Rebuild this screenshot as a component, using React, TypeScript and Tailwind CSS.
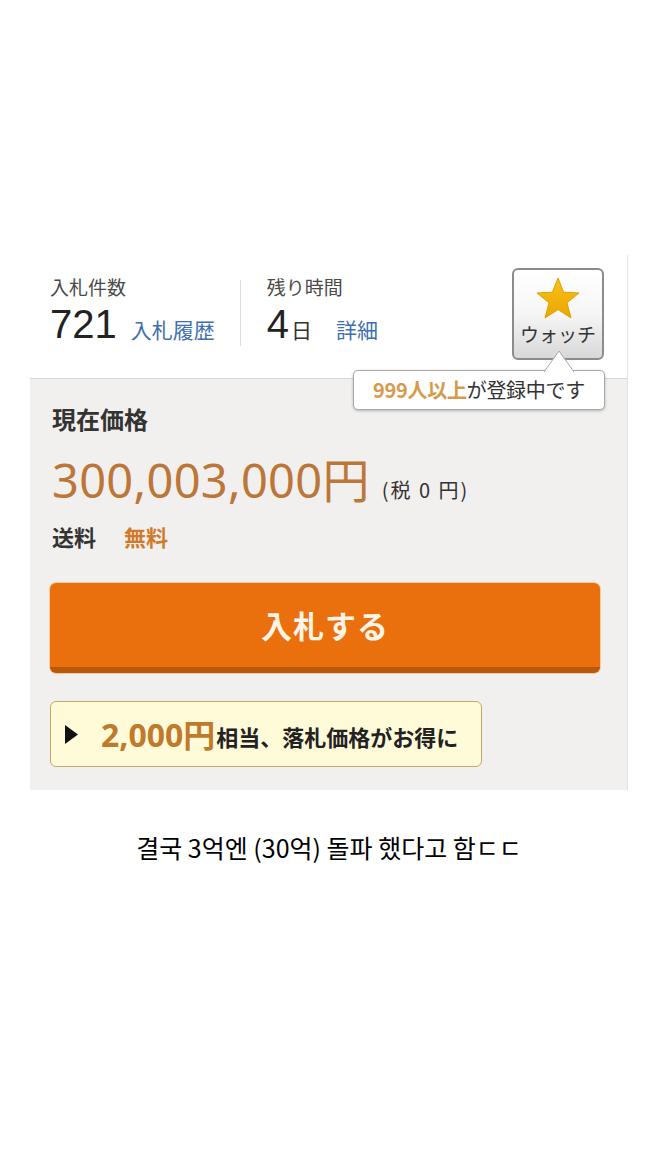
const jp = { fontFamily: '"Noto Sans CJK JP", "Noto Sans", sans-serif' };
const digits = { fontFamily: '"Liberation Sans", "Noto Sans", sans-serif' };

function Star() {
  return (
    <svg width="44" height="42" viewBox="0 0 44 42">
      <defs>
        <linearGradient id="starFill" x1="0" y1="0" x2="0" y2="1">
          <stop offset="0" stopColor="#f7c21a" />
          <stop offset="1" stopColor="#eba600" />
        </linearGradient>
      </defs>
      <polygon
        points="22,1 27.6,15.2 43,16 31,25.8 35,41 22,32.6 9,41 13,25.8 1,16 16.4,15.2"
        fill="url(#starFill)"
        stroke="#e3a100"
        strokeWidth="1"
        strokeLinejoin="round"
      />
    </svg>
  );
}

export default function App() {
  return (
    <div className="w-[658px] h-[1169px] bg-white" style={jp}>
      <div className="pt-[255px] pl-[30px]">
        <div className="relative w-[598px]">
          {/* bid count / time left / watch */}
          <div className="h-[123px] bg-white border-r border-[#e6e6e6] flex items-start pl-[20px] pr-[23px] pt-[13px]">
            <div className="flex flex-col mt-[8px]">
              <span className="text-[19px] leading-[22px] text-[#4a4a4a]">入札件数</span>
              <div className="flex items-baseline mt-[6px]">
                <span className="text-[40px] leading-[40px] text-[#222]" style={digits}>721</span>
                <span className="ml-[14px] text-[21px] leading-[28px] text-[#3f6fb0]">入札履歴</span>
              </div>
            </div>
            <div className="w-px h-[66px] bg-[#dcdcdc] ml-[25px] mt-[12px]" />
            <div className="flex flex-col ml-[26px] mt-[8px]">
              <span className="text-[19px] leading-[22px] text-[#4a4a4a]">残り時間</span>
              <div className="flex items-baseline mt-[6px]">
                <span className="text-[40px] leading-[40px] text-[#222]" style={digits}>4</span>
                <span className="ml-[2px] text-[21px] leading-[28px] text-[#333]">日</span>
                <span className="ml-[24px] text-[21px] leading-[28px] text-[#3f6fb0]">詳細</span>
              </div>
            </div>
            <div className="ml-auto w-[92px] h-[92px] rounded-[6px] border-2 border-[#8c8c8c] bg-linear-to-b from-white via-[#f6f6f6] to-[#d8d8d8] flex flex-col items-center pt-[7px]">
              <Star />
              <span className="text-[19px] leading-[22px] text-[#333] mt-[4px]">ウォッチ</span>
            </div>
          </div>

          {/* watchers tooltip */}
          <div className="absolute left-[323px] top-[115px] w-[252px] h-[40px] bg-white border border-[#a8a8a8] rounded-[5px] shadow-[0_1px_3px_rgba(0,0,0,0.25)] flex items-center justify-center z-10">
            <svg className="absolute left-[190px] top-[-21px]" width="30" height="22" viewBox="0 0 30 22">
              <path d="M0 22 L15 1 L30 22 Z" fill="white" />
              <path d="M0 22 L15 1 L30 22" fill="none" stroke="#a8a8a8" strokeWidth="1" />
            </svg>
            <span className="text-[20px] text-[#333] tracking-[-0.3px]">
              <span className="text-[#d69a4e] font-bold">999人以上</span>が登録中です
            </span>
          </div>

          {/* price area */}
          <div className="h-[412px] bg-[#f1f0ee] border-t border-[#d6d6d6] border-r border-r-[#e2e2e2] pl-[22px] pr-[27px] pt-[25px] flex flex-col">
            <span className="text-[24px] leading-[30px] font-bold text-[#333]">現在価格</span>
            <div className="flex items-baseline mt-[19px]">
              <span className="text-[47px] leading-[50px] text-[#bc7638] tracking-[0.3px]" style={{ fontFamily: '"Noto Sans", "Noto Sans CJK JP", sans-serif' }}>
                300,003,000<span style={jp}>円</span>
              </span>
              <span className="ml-[12px] text-[20px] text-[#333] tracking-[2px]">(税 0 円)</span>
            </div>
            <div className="flex items-center mt-[17px] text-[22px] leading-[28px] font-bold">
              <span className="text-[#333]">送料</span>
              <span className="ml-[28px] text-[#d07a2c]">無料</span>
            </div>
            <button className="mt-[33px] w-[550px] -ml-[2px] h-[90px] rounded-[6px] bg-[#e9700d] border-b-[6px] border-[#b9570b] shadow-[0_0_0_1px_#f6cba0] flex items-center justify-center">
              <span className="text-[31px] font-bold text-[#fff4e6] tracking-[1px]">入札する</span>
            </button>
            <div className="mt-[28px] -ml-[2px] w-[432px] h-[66px] rounded-[6px] bg-[#fffbd9] border border-[#c8a86a] flex items-center pl-[14px]">
              <svg width="13" height="19" viewBox="0 0 13 19">
                <polygon points="0,0 13,9.5 0,19" fill="#111" />
              </svg>
              <span className="ml-[23px] text-[32px] leading-[40px] font-bold text-[#bf7a2c]" style={{ fontFamily: '"Noto Sans", "Noto Sans CJK JP", sans-serif' }}>
                2,000<span style={jp}>円</span>
              </span>
              <span className="ml-[1px] text-[22px] font-bold text-[#222] mt-[4px]">相当、落札価格がお得に</span>
            </div>
          </div>
        </div>
      </div>

      <p className="mt-[40px] text-center text-[25px] leading-[34px] text-black" style={{ fontFamily: '"Noto Sans CJK KR", sans-serif' }}>
        결국 3억엔 (30억) 돌파 했다고 함ㄷㄷ
      </p>
    </div>
  );
}
